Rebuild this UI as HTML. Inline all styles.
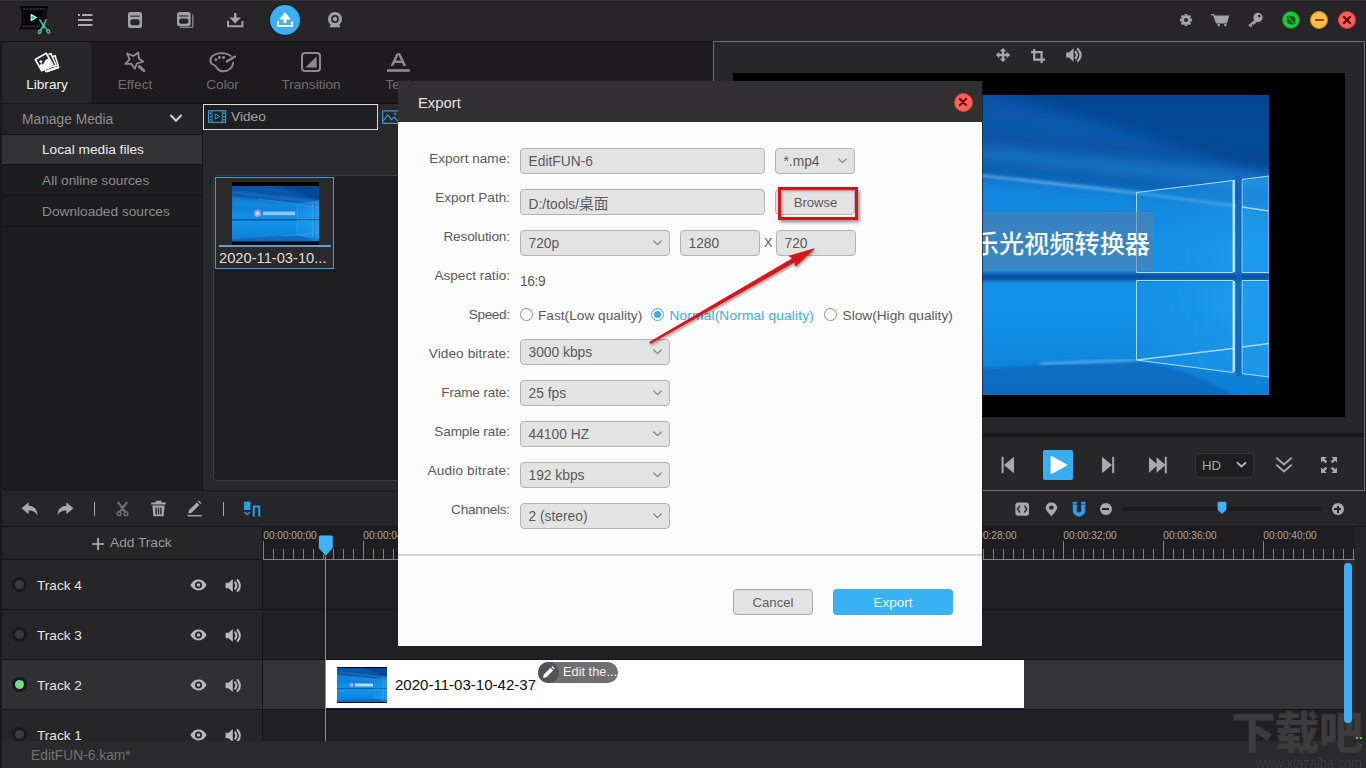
<!DOCTYPE html>
<html>
<head>
<meta charset="utf-8">
<title>EditFUN - Export</title>
<style>
*{box-sizing:border-box;margin:0;padding:0}
html,body{width:1366px;height:768px;overflow:hidden;background:#1d1c1e}
body{font-family:"Liberation Sans","Noto Sans CJK SC",sans-serif;color:#9a999b;position:relative}
.a{position:absolute}
.t{position:absolute;white-space:nowrap;line-height:1}
svg{position:absolute;overflow:visible}
/* top bar */
#topbar{left:0;top:0;width:1366px;height:41px;background:#272528}
#tabbar{left:2px;top:42px;width:711px;height:61px;background:#1d1b1e}
.tab{top:42px;height:61px}
.tablabel{font-size:13.6px;color:#706f71;top:77.5px;text-align:center;width:90px}
/* left panel */
.lp{left:2px;width:200px;height:30px;background:#1e1d1f}
.lpt{font-size:13.7px;color:#8d8c8e;left:42px}
/* dialog */
.lbl{font-size:13.6px;color:#5a595a;text-align:right;width:112px;left:398px}
.fld{position:absolute;height:26px;background:#e4e3e4;border:1px solid #b4b3b4;border-radius:4px}
.ft{font-size:13.8px;color:#5a595a}
.chev{width:10px;height:6px}
/* tracks */
.trk{left:2px;width:260px;height:49px;background:#262527}
.trkname{font-size:13.6px;color:#e6e6e6;left:37px}
.rl{font-size:10.1px;color:#a9a8aa;top:531px}
</style>
</head>
<body>
<!-- ===== base backgrounds ===== -->
<div class="a" style="left:0;top:0;width:2px;height:768px;background:#19181a"></div>
<div class="a" id="topbar"></div>
<div class="a" style="left:0;top:41px;width:713px;height:1px;background:#141315"></div>
<div class="a" id="tabbar"></div>
<div class="a tab" style="left:2px;width:89px;background:#272628"></div>
<div class="a" style="left:2px;top:103px;width:711px;height:1px;background:#151416"></div>

<!-- top line highlight -->
<div class="a" style="left:0;top:0;width:1366px;height:1px;background:#323133"></div>
<!-- logo -->
<svg style="left:18px;top:4px" width="36" height="34" viewBox="18 4 36 34">
  <path d="M20.4 6.9 H47.4 Q46.2 9 45.6 11 V24.4 Q46.2 26.4 47.4 28.4 H20.4 Q21.6 26.4 22.4 24.4 V11 Q21.6 9 20.4 6.9z" fill="#161517" stroke="#040404" stroke-width="1.5" stroke-linejoin="round"/>
  <rect x="24.6" y="11.2" width="18" height="13" rx="1" fill="#040404"/>
  <path d="M22.4 11 H45.6 M22.4 24.4 H45.6" stroke="#040404" stroke-width="1"/>
  <g fill="#3b3a3c"><rect x="23.2" y="8.3" width="1.5" height="1.3"/><rect x="26.6" y="8.3" width="1.5" height="1.3"/><rect x="30.0" y="8.3" width="1.5" height="1.3"/><rect x="33.4" y="8.3" width="1.5" height="1.3"/><rect x="36.8" y="8.3" width="1.5" height="1.3"/><rect x="40.2" y="8.3" width="1.5" height="1.3"/><rect x="43.6" y="8.3" width="1.5" height="1.3"/><rect x="23.2" y="25.8" width="1.5" height="1.3"/><rect x="26.6" y="25.8" width="1.5" height="1.3"/><rect x="30.0" y="25.8" width="1.5" height="1.3"/><rect x="33.4" y="25.8" width="1.5" height="1.3"/><rect x="36.8" y="25.8" width="1.5" height="1.3"/></g>
  <path d="M31.2 14.6 L36.4 17.5 L31.2 20.4Z" fill="#3fc6b4" stroke="#c4efe8" stroke-width="1.2" stroke-linejoin="round"/>
  <path d="M31.9 15.9 L34.8 17.5 L31.9 19.1Z" fill="#3fc6b4"/>
  <g fill="#45c9b6"><path d="M38.8 19.2 L40 19 L44.9 26.2 L48.6 30 L47.4 30.6 L43.2 27.2z"/><path d="M46.9 19 L45.7 18.9 L42.4 26.2 L39.2 30.2 L40.6 30.8 L44.2 27.2z"/></g>
  <g fill="none" stroke="#45c9b6" stroke-width="1.25"><ellipse cx="39.8" cy="31.7" rx="1.3" ry="1.9" transform="rotate(28 39.8 31.7)"/><ellipse cx="48.3" cy="31.4" rx="1.3" ry="1.9" transform="rotate(-32 48.3 31.4)"/></g>
</svg>
<!-- menu -->
<svg style="left:78px;top:13px" width="15" height="14" viewBox="0 0 15 14"><g fill="#acabad"><rect x="0" y="1" width="2" height="2"/><rect x="4" y="1" width="10.5" height="2"/><rect x="0" y="6" width="14.5" height="2"/><rect x="0" y="11" width="14.5" height="2"/></g></svg>
<!-- save -->
<svg style="left:127px;top:11px" width="16" height="18" viewBox="127 11 16 18"><rect x="128" y="12" width="14" height="16" rx="2.5" fill="#a3a2a4"/><rect x="130.3" y="15.6" width="9.4" height="1.1" fill="#262527"/><rect x="130.4" y="19.2" width="9.2" height="6" rx="2" fill="#262527"/></svg>
<!-- save all -->
<svg style="left:176px;top:11px" width="18" height="18" viewBox="176 11 18 18"><path d="M180 27.3 H192.8 V14.5" fill="none" stroke="#a3a2a4" stroke-width="1"/><rect x="177" y="12" width="13.6" height="14.2" rx="2.5" fill="#a3a2a4"/><rect x="179.2" y="15.4" width="9.2" height="1.1" fill="#262527"/><rect x="179.2" y="18.6" width="9.2" height="5.2" rx="2" fill="#262527"/></svg>
<!-- download -->
<svg style="left:226px;top:11px" width="18" height="18" viewBox="226 11 18 18"><path d="M234 13 h2.4 v4.6 h4.6 l-5.8 5.8 l-5.8 -5.8 h4.6z" fill="#a3a2a4"/><path d="M228 21 v5.2 h14.4 v-5.2" fill="none" stroke="#a3a2a4" stroke-width="2"/></svg>
<!-- export -->
<div class="a" style="left:270px;top:5px;width:30px;height:30px;border-radius:50%;background:#3bb0f5;box-shadow:0 0 0 1px #0f1e2c"></div>
<svg style="left:276px;top:11px" width="18" height="18" viewBox="276 11 18 18"><path d="M285 12.6 l5.2 6.6 h-3.9 v3.6 h-2.6 v-3.6 h-3.9z" fill="#fff" stroke="#fff" stroke-width="0.6" stroke-linejoin="round"/><path d="M278 21 v4.9 h14 v-4.9" fill="none" stroke="#fff" stroke-width="2"/></svg>
<!-- webcam -->
<svg style="left:327px;top:11px" width="16" height="18" viewBox="327 11 16 18"><path d="M329.6 27.2 q0 -3.4 5.4 -3.4 q5.4 0 5.4 3.4z" fill="#a3a2a4"/><circle cx="335" cy="19" r="7" fill="#a3a2a4"/><circle cx="335" cy="19" r="3.9" fill="#262527"/><circle cx="335" cy="19" r="2.2" fill="#a3a2a4"/></svg>
<!-- gear -->
<svg style="left:1179px;top:13px" width="14" height="14" viewBox="-8 -8 16 16"><g fill="#a3a2a4"><circle r="5.2"/><g id="gt"><rect x="-1.6" y="-6.9" width="3.2" height="13.8" rx="0.6"/></g><use href="#gt" transform="rotate(45)"/><use href="#gt" transform="rotate(90)"/><use href="#gt" transform="rotate(135)"/></g><circle r="2.3" fill="#262527"/></svg>
<!-- cart -->
<svg style="left:1210px;top:13px" width="20" height="14" viewBox="1210 13 20 14"><path d="M1211 14.6 h2.6 l2.9 8.2 h10.4" fill="none" stroke="#a3a2a4" stroke-width="1.4" stroke-linejoin="round"/><path d="M1214.3 15.6 h14.9 l-1.7 6.6 h-10.8z" fill="#a3a2a4"/><rect x="1217.6" y="24" width="2.2" height="2.2" fill="#a3a2a4"/><rect x="1224.2" y="24" width="2.2" height="2.2" fill="#a3a2a4"/></svg>
<!-- key -->
<svg style="left:1247px;top:12px" width="17" height="16" viewBox="1247 12 17 16"><circle cx="1258" cy="17.4" r="4.6" fill="#a3a2a4"/><circle cx="1259.3" cy="16.1" r="1.3" fill="#262527"/><path d="M1255.4 19.6 l-6.6 5.6 l1.6 1.8 l1.6-1.2 l-.9-1.2 l1.3-1 l.9 1.1 l3.6-3.1z" fill="#a3a2a4" stroke="#a3a2a4" stroke-width="0.8" stroke-linejoin="round"/></svg>
<!-- window buttons -->
<div class="a" style="left:1282px;top:11px;width:18px;height:18px;border-radius:50%;background:#22c840;border:1.5px solid #0b8a22"></div>
<svg style="left:1287px;top:16px" width="8.4" height="8.4" viewBox="0 0 10 10"><path d="M0.4 0.4 h7 l2.2 2.2 v7 h-7 l-2.2 -2.2z M1.2 1 L9 9" fill="#075c14" stroke="#075c14" stroke-width="0.8"/><path d="M1 1 L9 9" stroke="#22c840" stroke-width="1.2"/></svg>
<div class="a" style="left:1310px;top:11px;width:18px;height:18px;border-radius:50%;background:#fdbe41;border:1.5px solid #c98f1c"></div>
<div class="a" style="left:1315px;top:19px;width:8.5px;height:2px;background:#8f4b06"></div>
<div class="a" style="left:1338px;top:11px;width:18px;height:18px;border-radius:50%;background:#fb625c;border:1.5px solid #cf3d38"></div>
<svg style="left:1343px;top:16px" width="8" height="8" viewBox="0 0 8 8"><path d="M0.7 0.7 L7.3 7.3 M7.3 0.7 L0.7 7.3" stroke="#5c0505" stroke-width="2" stroke-linecap="round"/></svg>

<!-- Library icon -->
<svg style="left:33px;top:51px" width="28" height="23" viewBox="33 51 28 23">
  <path d="M52.4 56.7 L55.1 55.7 L58.7 67.6 L46.4 71.7 L45.2 70.2" fill="none" stroke="#f6f6f6" stroke-width="1.6" stroke-linejoin="round"/>
  <path d="M47 71 L58.2 67.2" stroke="#f6f6f6" stroke-width="2.2"/>
  <path d="M48.4 54.5 L50.9 53.6 L56.2 65.5 L53.4 66.8" fill="none" stroke="#f6f6f6" stroke-width="1.6" stroke-linejoin="round"/>
  <path d="M44 69.9 L56 65.2" stroke="#f6f6f6" stroke-width="1.3"/>
  <path d="M35.3 59.5 L46.2 53.3 L52.8 64.7 L41.8 70.8z" fill="#272628" stroke="#f6f6f6" stroke-width="1.7" stroke-linejoin="round"/>
  <path d="M39 66.2 L41.6 63 L43 64.7 L45.7 59.7 L48.3 58.4 L52.2 64.8 L42 70.3z" fill="#f6f6f6"/>
  <circle cx="40.9" cy="61.6" r="1.45" fill="#f6f6f6"/>
</svg>
<div class="t tablabel" style="left:2px;color:#f1f1f1">Library</div>
<!-- Effect icon -->
<svg style="left:124px;top:51px" width="23" height="23" viewBox="124 51 23 23">
  <path d="M127 53.4 L133.4 56 L138.3 52.4 L138.8 58.5 L143.2 61.6 L136.8 63.5 L134.9 68.7 L131.3 63.9 L125.3 63.9 L129.7 59.3z" fill="none" stroke="#8c8b8d" stroke-width="1.8" stroke-linejoin="round"/>
  <path d="M139.4 66.6 L144 70.8" stroke="#8c8b8d" stroke-width="2.9" stroke-linecap="round"/>
</svg>
<div class="t tablabel" style="left:90px">Effect</div>
<!-- Color icon -->
<svg style="left:209px;top:51px" width="28" height="22" viewBox="209 51 28 22">
  <path d="M230.7 55.9 C228.5 54 225 53.1 221.6 53.1 C215 53.1 210.3 56.4 210.3 60.4 C210.3 63 212.4 64.2 214 65 C216 66 216.6 67.6 217.6 68.8 C219 70.6 221 71.3 223.2 71.3 C228.6 71.3 232.6 67.6 233.2 62.8" fill="none" stroke="#8c8b8d" stroke-width="1.9" stroke-linecap="round"/>
  <path d="M226.8 61.6 L235 56.6" stroke="#8c8b8d" stroke-width="2.3" stroke-linecap="round"/>
  <circle cx="215.9" cy="59.6" r="1.45" fill="#8c8b8d"/><circle cx="219.4" cy="57.5" r="1.45" fill="#8c8b8d"/><circle cx="223.6" cy="57.5" r="1.45" fill="#8c8b8d"/>
</svg>
<div class="t tablabel" style="left:177.5px">Color</div>
<!-- Transition icon -->
<svg style="left:300px;top:51px" width="22" height="22" viewBox="300 51 22 22">
  <rect x="302" y="53" width="18" height="18" rx="3" fill="none" stroke="#8c8b8d" stroke-width="2"/>
  <path d="M316.6 56.4 v11.2 h-11.2z" fill="#8c8b8d"/>
</svg>
<div class="t tablabel" style="left:266px">Transition</div>
<!-- Text icon -->
<svg style="left:386px;top:52px" width="25" height="21" viewBox="386 52 25 21">
  <path d="M390.4 65.9 L396.7 53.3 H400.1 L406.4 65.9 H403.5 L402.1 62.9 H394.7 L393.3 65.9z M395.8 60.6 H401 L398.4 55z" fill="#8c8b8d" fill-rule="evenodd"/>
  <rect x="387" y="69.2" width="22.8" height="2.6" fill="#8c8b8d"/>
</svg>
<div class="t tablabel" style="left:353px">Text</div>

<div class="a" style="left:2px;top:104px;width:200px;height:387px;background:#1d1c1e"></div>
<div class="a lp" style="top:104px;background:#242325"></div>
<div class="a" style="left:2px;top:134px;width:200px;height:1px;background:#141315"></div>
<div class="a lp" style="top:135px;height:29px;background:#333234"></div>
<div class="a" style="left:2px;top:164px;width:200px;height:1px;background:#141315"></div>
<div class="a" style="left:2px;top:195px;width:200px;height:1px;background:#141315"></div>
<div class="a" style="left:2px;top:226px;width:200px;height:1px;background:#141315"></div>
<div class="t" style="left:22px;top:112.6px;font-size:13.8px;color:#8f8e90">Manage Media</div>
<svg style="left:169px;top:113px" width="14" height="11" viewBox="0 0 14 11"><path d="M2 2.5 L7 7.8 L12 2.5" fill="none" stroke="#d2d1d3" stroke-width="2" stroke-linecap="round" stroke-linejoin="round"/></svg>
<div class="t lpt" style="top:143px;color:#ececec">Local media files</div>
<div class="t lpt" style="top:174px">All online sources</div>
<div class="t lpt" style="top:205px">Downloaded sources</div>

<div class="a" style="left:203px;top:104px;width:510px;height:386px;background:#282729"></div>
<div class="a" style="left:202px;top:104px;width:1px;height:387px;background:#161517"></div>
<!-- video tab -->
<div class="a" style="left:203px;top:104px;width:175px;height:26px;background:#1f1e20;border:1px solid #dcdcdc"></div>
<svg style="left:208px;top:110.4px" width="19" height="13.3" viewBox="0 0 20 14"><rect x="0.6" y="0.8" width="18" height="12.2" fill="none" stroke="#3c9bd6" stroke-width="1.2"/><path d="M4.2 0.8 v12.2 M15 0.8 v12.2" stroke="#3c9bd6" stroke-width="1"/><g fill="#3c9bd6"><rect x="1.6" y="2.6" width="1.8" height="1.6"/><rect x="1.6" y="6.1" width="1.8" height="1.6"/><rect x="1.6" y="9.6" width="1.8" height="1.6"/><rect x="15.8" y="2.6" width="1.8" height="1.6"/><rect x="15.8" y="6.1" width="1.8" height="1.6"/><rect x="15.8" y="9.6" width="1.8" height="1.6"/></g><path d="M7.6 4.2 l4.6 2.7 l-4.6 2.7z" fill="none" stroke="#3c9bd6" stroke-width="1"/></svg>
<div class="t" style="left:231px;top:110.3px;font-size:13.7px;color:#a5a4a6">Video</div>
<!-- image tab icon (partly hidden) -->
<svg style="left:382px;top:110px" width="18" height="15" viewBox="0 0 18 15"><rect x="0.6" y="0.8" width="17" height="12.6" rx="1" fill="none" stroke="#3c9bd6" stroke-width="1.2"/><path d="M1 11 l4.8 -6 l3.6 4.6 l2.6 -2.6 l4 4" fill="none" stroke="#3c9bd6" stroke-width="1.1"/><circle cx="13.2" cy="3.8" r="1" fill="none" stroke="#3c9bd6" stroke-width="0.9"/></svg>
<!-- list area -->
<div class="a" style="left:213px;top:175px;width:491px;height:306px;background:#1e1d1f;border:1px solid #3e3d40;border-radius:3px"></div>
<!-- thumbnail card -->
<div class="a" style="left:215px;top:177px;width:119px;height:92px;background:#2a292b;border:1px solid #4a9bcf;box-shadow:0 0 0 1px #17222c"></div>
<div class="a" style="left:232px;top:182px;width:87px;height:62.5px;background:#000"></div>
<svg style="left:232px;top:185.5px" width="87" height="55.5"><use href="#wall" width="87" height="55.5"/><circle cx="25.5" cy="27.5" r="3.4" fill="#b49cf0"/><circle cx="25.5" cy="27.5" r="1.4" fill="#e8d8ff"/><rect x="31" y="25.6" width="32" height="3.6" fill="#e4eefa" opacity=".6"/></svg>
<div class="a" style="left:219px;top:245px;width:112px;height:1.6px;background:#56a4d6"></div>
<div class="t" style="left:219px;top:250.5px;font-size:14.7px;color:#dedede">2020-11-03-10...</div>

<div class="a" style="left:713px;top:41px;width:652px;height:450px;background:#272628;border:1px solid #6e6d6f"></div>
<!-- preview tools -->
<svg style="left:996px;top:48px" width="14" height="14" viewBox="-7 -7 14 14"><g fill="#a9a8aa"><rect x="-1.2" y="-4.6" width="2.4" height="9.2"/><rect x="-4.6" y="-1.2" width="9.2" height="2.4"/><path d="M0 -7.1 l3.3 3.4 h-6.6z M0 7.1 l3.3 -3.4 h-6.6z M-7.1 0 l3.4 -3.3 v6.6z M7.1 0 l-3.4 -3.3 v6.6z"/></g></svg>
<svg style="left:1031px;top:49px" width="14" height="14" viewBox="0 0 14 14"><path d="M3.2 0 v10.6 h10.8 M0 3.2 h10.6 v10.8" fill="none" stroke="#a9a8aa" stroke-width="2.2"/></svg>
<svg style="left:1066px;top:48px" width="17" height="14" viewBox="0 0 17 14"><path d="M0.2 4.4 h2.8 l4.6 -4.2 v13.6 l-4.6 -4.2 h-2.8z" fill="#a9a8aa"/><path d="M9.6 3.8 q2.6 3.2 0 6.4 M11.8 1 q5.6 6 0 12" fill="none" stroke="#a9a8aa" stroke-width="2.2" stroke-linecap="round"/></svg>
<!-- black area -->
<div class="a" style="left:733px;top:73px;width:612px;height:344px;background:#000"></div>
<!-- video frame -->
<svg style="left:0;top:0" width="0" height="0"><defs>
  <filter id="b6" x="-20%" y="-20%" width="140%" height="140%"><feGaussianBlur stdDeviation="6"/></filter>
  <filter id="b2" x="-20%" y="-20%" width="140%" height="140%"><feGaussianBlur stdDeviation="1.6"/></filter>
  <linearGradient id="pg" x1="0" x2="1"><stop offset="0" stop-color="#1690e4"/><stop offset="1" stop-color="#22a0f0"/></linearGradient>
  <linearGradient id="wbg" x1="0" y1="0" x2="0" y2="1"><stop offset="0" stop-color="#0a52a6"/><stop offset=".2" stop-color="#0b62b8"/><stop offset=".36" stop-color="#0e7cd4"/><stop offset=".5" stop-color="#118ee6"/><stop offset=".7" stop-color="#1292ea"/><stop offset=".86" stop-color="#0f88de"/><stop offset="1" stop-color="#0c7ed6"/></linearGradient>
  <symbol id="wall" viewBox="736 95 533 300" preserveAspectRatio="none">
  <rect x="736" y="95" width="533" height="300" fill="url(#wbg)"/>
  <path d="M700 112 L1320 150 L1320 212 L1137 190 L700 158z" fill="#07458f" opacity=".4" filter="url(#b6)"/>
  <path d="M960 80 L1320 80 L1320 190z" fill="#063a80" opacity=".55" filter="url(#b6)"/>
  <path d="M700 118 L1320 178 L1320 196 L700 132z" fill="#2a9cf0" opacity=".35" filter="url(#b6)"/>
  <path d="M736 150 L1137 192 L1137 215 L736 205z" fill="#1492ea" opacity=".55" filter="url(#b6)"/>
  <path d="M900 166.5 L1137 193" stroke="#bfe6ff" stroke-width="1.6" opacity=".75" filter="url(#b2)"/>
  <path d="M1137 193 L1236 206" stroke="#d4efff" stroke-width="1.6" opacity=".8" filter="url(#b2)"/>
  <path d="M736 273 H1269 V281 H736z" fill="#07489a" opacity=".85" filter="url(#b2)"/>
  <path d="M700 386 Q960 368 1140 361 Q1200 372 1240 400 L700 400z" fill="#0a5eb4" opacity=".6" filter="url(#b2)"/>
  <path d="M1040 364 L1136 360" stroke="#cfeaff" stroke-width="1.6" opacity=".7" filter="url(#b2)"/>
  <path d="M1136.5 192.5 L1233 180.5 V272.5 H1136.5z" fill="url(#pg)" fill-opacity=".5" stroke="#a8dcfb" stroke-width="1"/>
  <path d="M1136.5 280.5 H1233 V372.5 L1136.5 360z" fill="url(#pg)" fill-opacity=".5" stroke="#a8dcfb" stroke-width="1"/>
  <path d="M1242 179.5 L1269 176 V272.5 H1242z" fill="#24a2f0" fill-opacity=".6" stroke="#a8dcfb" stroke-width="1"/>
  <path d="M1242 280.5 H1269 V377 L1242 373.5z" fill="#24a2f0" fill-opacity=".6" stroke="#a8dcfb" stroke-width="1"/>
  <path d="M1136.5 360 L1233 348.5 M1242 347 L1269 343.5 M1242 207 L1269 211" stroke="#c4e8ff" stroke-width="1.3" opacity=".8"/>
  <path d="M1234 180 V272 M1234 281 V372" stroke="#f2fbff" stroke-width="2.4" opacity=".95" filter="url(#b2)"/>
  <path d="M1234 180 V272 M1234 281 V372" stroke="#ffffff" stroke-width="1.4"/>
  <rect x="1236" y="176" width="5.5" height="200" fill="#0a66bc" opacity=".8"/>
  </symbol>
</defs></svg>
<div class="a" style="left:736px;top:95px;width:533px;height:300px;overflow:hidden;background:#0c70c8">
<svg style="left:0;top:0" width="533" height="300"><use href="#wall" width="533" height="300"/><rect x="0" y="117" width="418" height="59" fill="#5a80a8" opacity=".55"/></svg>
<div class="t" style="left:220px;top:134.5px;width:194px;text-align:right;font-size:25.2px;font-weight:500;color:#f8fafc;font-family:'Noto Sans CJK SC','Liberation Sans',sans-serif">乐光视频转换器</div>
</div>
<!-- separator -->
<div class="a" style="left:714px;top:433px;width:650px;height:4px;background:#19181a"></div>
<!-- controls -->
<svg style="left:1001px;top:456px" width="14" height="18" viewBox="0 0 14 18"><rect x="0.6" y="0.8" width="2" height="16.4" fill="#a9a8aa"/><path d="M13 0.8 v16.4 l-10 -8.2z" fill="#a9a8aa"/></svg>
<div class="a" style="left:1043px;top:450px;width:30px;height:30px;background:#38adf1;border-radius:2px"></div>
<svg style="left:1050px;top:455px" width="18" height="20" viewBox="0 0 18 20"><path d="M1.4 1.6 L16.2 10 L1.4 18.4z" fill="#fff" stroke="#fff" stroke-width="1.6" stroke-linejoin="round"/></svg>
<svg style="left:1101px;top:456px" width="14" height="18" viewBox="0 0 14 18"><rect x="11.2" y="0.8" width="2" height="16.4" fill="#a9a8aa"/><path d="M1 0.8 v16.4 l10 -8.2z" fill="#a9a8aa"/></svg>
<svg style="left:1148px;top:456px" width="20" height="18" viewBox="0 0 20 18"><rect x="16.8" y="0.8" width="2" height="16.4" fill="#a9a8aa"/><path d="M1 1.2 v15.6 l9 -7.8z M8.6 1.2 v15.6 l9 -7.8z" fill="#a9a8aa"/></svg>
<div class="a" style="left:1195px;top:453px;width:59px;height:25px;background:#1e1d1f;border:1px solid #343335;border-radius:4px"></div>
<div class="t" style="left:1202px;top:458.5px;font-size:13.2px;color:#a9a8aa">HD</div>
<svg style="left:1236px;top:461px" width="11" height="8" viewBox="0 0 11 8"><path d="M1.4 1.6 L5.5 5.6 L9.6 1.6" fill="none" stroke="#b8b7b9" stroke-width="1.8" stroke-linecap="round" stroke-linejoin="round"/></svg>
<svg style="left:1275px;top:456px" width="18" height="18" viewBox="0 0 18 18"><path d="M1.2 1.6 L9 8.4 L16.8 1.6 M1.2 8.6 L9 15.4 L16.8 8.6" fill="none" stroke="#a9a8aa" stroke-width="1.9"/></svg>
<svg style="left:1321px;top:457px" width="16" height="16" viewBox="0 0 16 16"><g fill="#a9a8aa"><path d="M0 0 h5.6 l-1.9 1.9 l2.6 2.6 l-1.8 1.8 l-2.6 -2.6 l-1.9 1.9z"/><path d="M16 0 v5.6 l-1.9 -1.9 l-2.6 2.6 l-1.8 -1.8 l2.6 -2.6 l-1.9 -1.9z"/><path d="M0 16 v-5.6 l1.9 1.9 l2.6 -2.6 l1.8 1.8 l-2.6 2.6 l1.9 1.9z"/><path d="M16 16 h-5.6 l1.9 -1.9 l-2.6 -2.6 l1.8 -1.8 l2.6 2.6 l1.9 -1.9z"/></g></svg>

<div class="a" style="left:2px;top:491px;width:1364px;height:250px;background:#262527"></div>
<div class="a" style="left:2px;top:526px;width:1364px;height:1px;background:#151416"></div>
<svg style="left:21px;top:501px" width="18" height="16" viewBox="0 0 18 16"><path d="M7.6 1.2 v3.6 c5.4 0.2 8.6 3.4 9 9.6 c-2 -3.6 -4.6 -5 -9 -5 v3.8 l-7 -6z" fill="#a9a8aa"/></svg>
<svg style="left:56px;top:501px" width="18" height="16" viewBox="0 0 18 16"><path d="M10.4 1.2 v3.6 c-5.4 0.2 -8.6 3.4 -9 9.6 c2 -3.6 4.6 -5 9 -5 v3.8 l7 -6z" fill="#a9a8aa"/></svg>
<div class="a" style="left:94px;top:502px;width:1px;height:14px;background:#a9a8aa"></div>
<svg style="left:116px;top:501.6px" width="13" height="14.6" viewBox="0 0 15 17"><path d="M2.6 0.8 L10.6 11.4 M12.4 0.8 L4.4 11.4" stroke="#6e6d6f" stroke-width="2.6" stroke-linecap="round" fill="none"/><circle cx="3.4" cy="13.6" r="2.2" fill="none" stroke="#6e6d6f" stroke-width="1.7"/><circle cx="11.6" cy="13.6" r="2.2" fill="none" stroke="#6e6d6f" stroke-width="1.7"/></svg>
<svg style="left:150px;top:500px" width="17" height="17" viewBox="0 0 17 17"><path d="M5.8 0.8 h5.4 v1.6 h4.6 v2 h-14.6 v-2 h4.6z" fill="#a9a8aa"/><path d="M2.4 5.6 h12.2 l-1 10.6 h-10.2z M5.4 7.4 v7 h1.4 v-7z M7.8 7.4 v7 h1.4 v-7z M10.2 7.4 v7 h1.4 v-7z" fill="#a9a8aa" fill-rule="evenodd"/></svg>
<svg style="left:187px;top:500px" width="16" height="17" viewBox="0 0 16 17"><path d="M2 10.2 L9.8 2.4 l2.6 2.6 L4.6 12.8 l-3.4 0.8z M10.8 1.4 l1 -1 l2.6 2.6 l-1 1z" fill="#a9a8aa"/><rect x="0.6" y="15" width="14" height="1.4" fill="#a9a8aa"/></svg>
<div class="a" style="left:223px;top:502px;width:1px;height:14px;background:#a9a8aa"></div>
<svg style="left:243px;top:501px" width="19" height="16" viewBox="0 0 19 16"><rect x="1" y="0.6" width="6.4" height="8.4" fill="#2a9ce6"/><path d="M1.4 11 L4.2 13.6 L7 11" fill="none" stroke="#2a9ce6" stroke-width="1.5"/><path d="M10.8 15.4 V5.4 h5.4 V15.4" fill="none" stroke="#2a9ce6" stroke-width="2"/></svg>
<svg style="left:1014.8px;top:501.8px" width="14.4" height="14.2" viewBox="0 0 16 14" preserveAspectRatio="none"><rect x="0.4" y="0.4" width="15.2" height="13.2" rx="3" fill="#a9a8aa"/><path d="M5.6 3.6 L2.8 7 L5.6 10.4 M10.4 3.6 L13.2 7 L10.4 10.4" fill="none" stroke="#262527" stroke-width="1.5"/></svg>
<svg style="left:1044.6px;top:502.1px" width="12.8" height="15" viewBox="0 0 12 16" preserveAspectRatio="none"><path d="M6 0.6 a5.4 5.4 0 0 1 5.4 5.4 c0 3.2 -3.4 6.2 -5.4 9.4 c-2 -3.2 -5.4 -6.2 -5.4 -9.4 a5.4 5.4 0 0 1 5.4 -5.4z" fill="#a9a8aa"/><circle cx="6" cy="6" r="2.2" fill="#262527"/></svg>
<svg style="left:1072px;top:501px" width="14" height="16" viewBox="0 0 14 16"><path d="M2.8 0.8 v8.6 a4.2 4.2 0 0 0 8.4 0 v-8.6" fill="none" stroke="#2a9ce6" stroke-width="4.1"/><path d="M0.6 3.4 h4.4 M9 3.4 h4.4" stroke="#1c5f8e" stroke-width="1.1"/></svg>
<div class="a" style="left:1099.5px;top:503px;width:12.4px;height:12.4px;border-radius:50%;background:#a9a8aa"></div><div class="a" style="left:1102.2px;top:508.2px;width:7px;height:2px;background:#262527"></div>
<div class="a" style="left:1122px;top:507px;width:200px;height:4px;border-radius:2px;background:#19181a"></div>
<svg style="left:1217px;top:501px" width="10" height="14" viewBox="0 0 10 14"><path d="M1.6 0.8 h6.8 a1 1 0 0 1 1 1 v7 l-4.4 4.2 l-4.4 -4.2 v-7 a1 1 0 0 1 1 -1z" fill="#3fb2f4"/></svg>
<div class="a" style="left:1331.5px;top:503px;width:12.4px;height:12.4px;border-radius:50%;background:#a9a8aa"></div><div class="a" style="left:1334.2px;top:508.2px;width:7px;height:2px;background:#262527"></div><div class="a" style="left:1336.7px;top:505.7px;width:2px;height:7px;background:#262527"></div>
<div class="a" style="left:2px;top:559px;width:1342px;height:1px;background:#151416"></div>
<svg style="left:91px;top:537px" width="14" height="14" viewBox="0 0 14 14"><path d="M7 1 v12 M1 7 h12" stroke="#bcbbbd" stroke-width="1.6"/></svg>
<div class="t" style="left:110px;top:536px;font-size:13.7px;color:#9c9b9d">Add Track</div>
<div class="a" style="left:263px;top:527px;width:1092px;height:32px;background:#1e1d1f"></div>
<svg style="left:0;top:0" width="1366" height="768" viewBox="0 0 1366 768"><path d="M263.5 541V559M273.5 549V559M283.5 549V559M293.5 549V559M303.5 549V559M313.5 549V559M323.5 549V559M333.5 549V559M343.5 549V559M353.5 549V559M363.5 541V559M373.5 549V559M383.5 549V559M393.5 549V559M403.5 549V559M413.5 549V559M423.5 549V559M433.5 549V559M443.5 549V559M453.5 549V559M463.5 541V559M473.5 549V559M483.5 549V559M493.5 549V559M503.5 549V559M513.5 549V559M523.5 549V559M533.5 549V559M543.5 549V559M553.5 549V559M563.5 541V559M573.5 549V559M583.5 549V559M593.5 549V559M603.5 549V559M613.5 549V559M623.5 549V559M633.5 549V559M643.5 549V559M653.5 549V559M663.5 541V559M673.5 549V559M683.5 549V559M693.5 549V559M703.5 549V559M713.5 549V559M723.5 549V559M733.5 549V559M743.5 549V559M753.5 549V559M763.5 541V559M773.5 549V559M783.5 549V559M793.5 549V559M803.5 549V559M813.5 549V559M823.5 549V559M833.5 549V559M843.5 549V559M853.5 549V559M863.5 541V559M873.5 549V559M883.5 549V559M893.5 549V559M903.5 549V559M913.5 549V559M923.5 549V559M933.5 549V559M943.5 549V559M953.5 549V559M963.5 541V559M973.5 549V559M983.5 549V559M993.5 549V559M1003.5 549V559M1013.5 549V559M1023.5 549V559M1033.5 549V559M1043.5 549V559M1053.5 549V559M1063.5 541V559M1073.5 549V559M1083.5 549V559M1093.5 549V559M1103.5 549V559M1113.5 549V559M1123.5 549V559M1133.5 549V559M1143.5 549V559M1153.5 549V559M1163.5 541V559M1173.5 549V559M1183.5 549V559M1193.5 549V559M1203.5 549V559M1213.5 549V559M1223.5 549V559M1233.5 549V559M1243.5 549V559M1253.5 549V559M1263.5 541V559M1273.5 549V559M1283.5 549V559M1293.5 549V559M1303.5 549V559M1313.5 549V559M1323.5 549V559M1333.5 549V559M1343.5 549V559M1353.5 549V559" stroke="#828183" stroke-width="1" fill="none"/><path d="M263 559.5H1355" stroke="#828183" stroke-width="1"/></svg>
<div class="t rl" style="left:263.3px">00:00:00;00</div>
<div class="t rl" style="left:363.3px">00:00:04;00</div>
<div class="t rl" style="left:463.3px">00:00:08;00</div>
<div class="t rl" style="left:563.3px">00:00:12;00</div>
<div class="t rl" style="left:663.3px">00:00:16;00</div>
<div class="t rl" style="left:763.3px">00:00:20;00</div>
<div class="t rl" style="left:863.3px">00:00:24;00</div>
<div class="t rl" style="left:963.3px">00:00:28;00</div>
<div class="t rl" style="left:1063.3px">00:00:32;00</div>
<div class="t rl" style="left:1163.3px">00:00:36;00</div>
<div class="t rl" style="left:1263.3px">00:00:40;00</div>
<div class="a" style="left:263px;top:560px;width:1081px;height:181px;background:#201f21"></div>
<div class="a" style="left:1344px;top:560px;width:11px;height:181px;background:#2b2a2c"></div>
<div class="a" style="left:262px;top:527px;width:1px;height:214px;background:#151416"></div>
<div class="a trk" style="top:560px;height:49px"></div>
<div class="a" style="left:2px;top:609px;width:1342px;height:1px;background:#151416"></div>
<div class="a" style="left:12px;top:577px;width:15px;height:15px;border-radius:50%;background:#19181a"></div>
<div class="a" style="left:15px;top:580px;width:9px;height:9px;border-radius:50%;background:#3a393b"></div>
<div class="t trkname" style="top:578.5px">Track 4</div>
<svg style="left:190px;top:579px" width="17" height="12" viewBox="0 0 17 12"><path d="M0.4 6 C3 1.6 6 0.6 8.5 0.6 C11 0.6 14 1.6 16.6 6 C14 10.4 11 11.4 8.5 11.4 C6 11.4 3 10.4 0.4 6z" fill="#b9b8ba"/><circle cx="8.5" cy="6" r="3.5" fill="#262527"/><circle cx="8.5" cy="6" r="1.8" fill="#b9b8ba"/></svg>
<svg style="left:225px;top:578px" width="18" height="15" viewBox="0 0 18 15"><path d="M0.6 4.8 h3 l4.2 -3.8 v13 l-4.2 -3.8 h-3z" fill="#b9b8ba"/><path d="M10.2 4.4 q2.4 3.1 0 6.2 M12.6 2 q4.6 5.5 0 11" fill="none" stroke="#b9b8ba" stroke-width="2.1" stroke-linecap="round"/></svg>
<div class="a trk" style="top:610px;height:49px"></div>
<div class="a" style="left:2px;top:659px;width:1342px;height:1px;background:#151416"></div>
<div class="a" style="left:12px;top:627px;width:15px;height:15px;border-radius:50%;background:#19181a"></div>
<div class="a" style="left:15px;top:630px;width:9px;height:9px;border-radius:50%;background:#3a393b"></div>
<div class="t trkname" style="top:628.5px">Track 3</div>
<svg style="left:190px;top:629px" width="17" height="12" viewBox="0 0 17 12"><path d="M0.4 6 C3 1.6 6 0.6 8.5 0.6 C11 0.6 14 1.6 16.6 6 C14 10.4 11 11.4 8.5 11.4 C6 11.4 3 10.4 0.4 6z" fill="#b9b8ba"/><circle cx="8.5" cy="6" r="3.5" fill="#262527"/><circle cx="8.5" cy="6" r="1.8" fill="#b9b8ba"/></svg>
<svg style="left:225px;top:628px" width="18" height="15" viewBox="0 0 18 15"><path d="M0.6 4.8 h3 l4.2 -3.8 v13 l-4.2 -3.8 h-3z" fill="#b9b8ba"/><path d="M10.2 4.4 q2.4 3.1 0 6.2 M12.6 2 q4.6 5.5 0 11" fill="none" stroke="#b9b8ba" stroke-width="2.1" stroke-linecap="round"/></svg>
<div class="a trk" style="top:660px;height:49px;background:#302f31"></div>
<div class="a" style="left:263px;top:660px;width:1081px;height:49px;background:#343335"></div>
<div class="a" style="left:2px;top:709px;width:1342px;height:1px;background:#151416"></div>
<div class="a" style="left:12px;top:677px;width:15px;height:15px;border-radius:50%;background:#19181a"></div>
<div class="a" style="left:15px;top:680px;width:9px;height:9px;border-radius:50%;background:#6fe08a"></div>
<div class="t trkname" style="top:678.5px">Track 2</div>
<svg style="left:190px;top:679px" width="17" height="12" viewBox="0 0 17 12"><path d="M0.4 6 C3 1.6 6 0.6 8.5 0.6 C11 0.6 14 1.6 16.6 6 C14 10.4 11 11.4 8.5 11.4 C6 11.4 3 10.4 0.4 6z" fill="#b9b8ba"/><circle cx="8.5" cy="6" r="3.5" fill="#262527"/><circle cx="8.5" cy="6" r="1.8" fill="#b9b8ba"/></svg>
<svg style="left:225px;top:678px" width="18" height="15" viewBox="0 0 18 15"><path d="M0.6 4.8 h3 l4.2 -3.8 v13 l-4.2 -3.8 h-3z" fill="#b9b8ba"/><path d="M10.2 4.4 q2.4 3.1 0 6.2 M12.6 2 q4.6 5.5 0 11" fill="none" stroke="#b9b8ba" stroke-width="2.1" stroke-linecap="round"/></svg>
<div class="a trk" style="top:710px;height:31px"></div>
<div class="a" style="left:12px;top:727px;width:15px;height:15px;border-radius:50%;background:#19181a"></div>
<div class="a" style="left:15px;top:730px;width:9px;height:9px;border-radius:50%;background:#3a393b"></div>
<div class="t trkname" style="top:728.5px">Track 1</div>
<svg style="left:190px;top:729px" width="17" height="12" viewBox="0 0 17 12"><path d="M0.4 6 C3 1.6 6 0.6 8.5 0.6 C11 0.6 14 1.6 16.6 6 C14 10.4 11 11.4 8.5 11.4 C6 11.4 3 10.4 0.4 6z" fill="#b9b8ba"/><circle cx="8.5" cy="6" r="3.5" fill="#262527"/><circle cx="8.5" cy="6" r="1.8" fill="#b9b8ba"/></svg>
<svg style="left:225px;top:728px" width="18" height="15" viewBox="0 0 18 15"><path d="M0.6 4.8 h3 l4.2 -3.8 v13 l-4.2 -3.8 h-3z" fill="#b9b8ba"/><path d="M10.2 4.4 q2.4 3.1 0 6.2 M12.6 2 q4.6 5.5 0 11" fill="none" stroke="#b9b8ba" stroke-width="2.1" stroke-linecap="round"/></svg>
<div class="a" style="left:326px;top:660px;width:698px;height:49px;background:#fff;border-bottom:1px solid #1c1b3a"></div>
<div class="a" style="left:337px;top:667px;width:50px;height:36px;background:#000"></div>
<svg style="left:337px;top:668px" width="50" height="34" viewBox="0 0 50 32" preserveAspectRatio="none"><use href="#wall" width="50" height="32"/><circle cx="14.6" cy="16" r="2" fill="#b49cf0"/><rect x="18" y="14.6" width="18" height="2.8" fill="#e4eefa" opacity=".8"/></svg>
<div class="t" style="left:395px;top:676.6px;font-size:15.05px;color:#0a0a0a">2020-11-03-10-42-37</div>
<div class="a" style="left:538px;top:662px;width:80px;height:21px;border-radius:10.5px;background:#6f6e70"></div>
<div class="a" style="left:538px;top:662px;width:21px;height:21px;border-radius:50%;background:#525153"></div>
<svg style="left:542px;top:666px" width="13" height="13" viewBox="0 0 13 13"><path d="M1 12 l0.8 -3.4 L8.6 1.8 l2.6 2.6 L4.4 11.2z M9.4 1 l0.9 -0.9 l2.6 2.6 l-0.9 0.9z" fill="#fff"/></svg>
<div class="t" style="left:563px;top:666px;font-size:12.8px;color:#f4f4f4">Edit the...</div>
<div class="a" style="left:325px;top:553px;width:1px;height:188px;background:#8d8c8e"></div>
<svg style="left:316.7px;top:533.8px" width="17.6" height="23.4" viewBox="0 0 17 23"><path d="M3.4 1 h10.2 a2.2 2.2 0 0 1 2.2 2.2 v10.6 l-7.3 8 l-7.3 -8 v-10.6 a2.2 2.2 0 0 1 2.2 -2.2z" fill="#3fb3f5" stroke="#12202c" stroke-width="0.8"/></svg>
<div class="a" style="left:2px;top:741px;width:1364px;height:27px;background:#2a292b"></div>
<div class="t" style="left:31px;top:749.2px;font-size:13.8px;color:#737274">EditFUN-6.kam*</div>
<div class="t" style="left:1231px;top:708px;font-size:44.5px;font-weight:900;letter-spacing:-0.6px;color:#3c3b3d;font-family:'Noto Sans CJK SC',sans-serif">下载吧</div>
<div class="t" style="left:1256px;top:756px;font-size:12.9px;color:#3c3b3d;transform:scaleY(1.3);transform-origin:0 0">www.xiazaiba.com</div>
<div class="a" style="left:1344px;top:563px;width:8px;height:160px;border-radius:4px;background:#3cb0f4"></div>
<div class="a" style="left:1356px;top:737px;width:2px;height:2px;background:#3cd04c"></div><div class="a" style="left:1360px;top:737px;width:2px;height:2px;background:#3cd04c"></div>

<div class="a" style="left:398px;top:81px;width:584px;height:565px;background:#fdfcfd"></div>
<div class="a" style="left:398px;top:81px;width:584px;height:41px;background:#323032"></div>
<div class="a" style="left:982px;top:81px;width:1px;height:565px;background:#1a1a2a;opacity:.7"></div>
<div class="t" style="left:418px;top:95.5px;font-size:14.8px;color:#e4e3e4">Export</div>
<div class="a" style="left:953.5px;top:92.5px;width:19px;height:19px;border-radius:50%;background:#f8635d;border:1px solid #d8413c"></div>
<svg style="left:959px;top:98px" width="8" height="8" viewBox="0 0 8 8"><path d="M0.8 0.8 L7.2 7.2 M7.2 0.8 L0.8 7.2" stroke="#6b0404" stroke-width="2" stroke-linecap="round"/></svg>
<div class="t lbl" style="top:151.9px;">Export name:</div>
<div class="fld" style="left:520px;top:148px;width:245px"></div>
<div class="t ft" style="left:528.5px;top:155.2px">EditFUN-6</div>
<div class="fld" style="left:775px;top:148px;width:80px"></div>
<div class="t ft" style="left:783.5px;top:155.2px">*.mp4</div>
<svg style="left:838px;top:157.5px" width="9" height="6" viewBox="0 0 9 6"><path d="M0.8 1 L4.5 4.6 L8.2 1" fill="none" stroke="#828182" stroke-width="1.2" stroke-linecap="round" stroke-linejoin="round"/></svg>
<div class="t lbl" style="top:190.8px;">Export Path:</div>
<div class="fld" style="left:520px;top:189px;width:245px"></div>
<div class="t ft" style="left:528.5px;top:196.2px">D:/tools/<span style="font-family:'Noto Sans CJK SC',sans-serif;font-size:14.6px">桌面</span></div>
<div class="fld" style="left:775px;top:189px;width:80px"></div>
<div class="t ft" style="left:775px;top:195.8px;width:81px;text-align:center;font-size:13.1px">Browse</div>
<div class="t lbl" style="top:229.7px;letter-spacing:-0.14px;margin-left:-0.14px">Resolution:</div>
<div class="fld" style="left:520px;top:230px;width:150px"></div>
<div class="t ft" style="left:528.5px;top:237.2px">720p</div>
<svg style="left:653px;top:239.5px" width="9" height="6" viewBox="0 0 9 6"><path d="M0.8 1 L4.5 4.6 L8.2 1" fill="none" stroke="#828182" stroke-width="1.2" stroke-linecap="round" stroke-linejoin="round"/></svg>
<div class="fld" style="left:680px;top:230px;width:80px"></div>
<div class="t ft" style="left:688.5px;top:237.2px">1280</div>
<div class="t ft" style="left:764px;top:237px;font-size:12.6px">X</div>
<div class="fld" style="left:776px;top:230px;width:80px"></div>
<div class="t ft" style="left:784.5px;top:237.2px">720</div>
<div class="t lbl" style="top:268.6px;">Aspect ratio:</div>
<div class="t ft" style="left:520px;top:274.6px;letter-spacing:-.4px">16:9</div>
<div class="t lbl" style="top:307.5px;letter-spacing:-0.38px;margin-left:-0.38px">Speed:</div>
<div class="a" style="left:520.2px;top:308.2px;width:12.6px;height:12.6px;border-radius:50%;border:1px solid #929192;background:#fff"></div>
<div class="t ft" style="left:538px;top:308.5px;font-size:13.7px">Fast(Low quality)</div>
<div class="a" style="left:650.7px;top:308.2px;width:13px;height:13px;border-radius:50%;border:1px solid #3fa9e6;background:#fff"></div>
<div class="a" style="left:653.5px;top:311.0px;width:7px;height:7px;border-radius:50%;background:#3fa9e6"></div>
<div class="t ft" style="left:669.5px;top:308.5px;font-size:13.7px;letter-spacing:.17px;color:#3fa9e6">Normal(Normal quality)</div>
<div class="a" style="left:824.2px;top:308.2px;width:12.6px;height:12.6px;border-radius:50%;border:1px solid #929192;background:#fff"></div>
<div class="t ft" style="left:842.5px;top:308.5px;font-size:13.7px">Slow(High quality)</div>
<div class="t lbl" style="top:347.3px;letter-spacing:0.11px;margin-left:0.11px">Video bitrate:</div>
<div class="fld" style="left:520px;top:339px;width:150px"></div>
<div class="t ft" style="left:528.5px;top:346.2px">3000 kbps</div>
<svg style="left:653px;top:348.5px" width="9" height="6" viewBox="0 0 9 6"><path d="M0.8 1 L4.5 4.6 L8.2 1" fill="none" stroke="#828182" stroke-width="1.2" stroke-linecap="round" stroke-linejoin="round"/></svg>
<div class="t lbl" style="top:386.2px;letter-spacing:-0.15px;margin-left:-0.15px">Frame rate:</div>
<div class="fld" style="left:520px;top:380px;width:150px"></div>
<div class="t ft" style="left:528.5px;top:387.2px">25 fps</div>
<svg style="left:653px;top:389.5px" width="9" height="6" viewBox="0 0 9 6"><path d="M0.8 1 L4.5 4.6 L8.2 1" fill="none" stroke="#828182" stroke-width="1.2" stroke-linecap="round" stroke-linejoin="round"/></svg>
<div class="t lbl" style="top:425.1px;letter-spacing:-0.12px;margin-left:-0.12px">Sample rate:</div>
<div class="fld" style="left:520px;top:421px;width:150px"></div>
<div class="t ft" style="left:528.5px;top:428.2px">44100 HZ</div>
<svg style="left:653px;top:430.5px" width="9" height="6" viewBox="0 0 9 6"><path d="M0.8 1 L4.5 4.6 L8.2 1" fill="none" stroke="#828182" stroke-width="1.2" stroke-linecap="round" stroke-linejoin="round"/></svg>
<div class="t lbl" style="top:464.0px;letter-spacing:0.19px;margin-left:0.19px">Audio bitrate:</div>
<div class="fld" style="left:520px;top:462px;width:150px"></div>
<div class="t ft" style="left:528.5px;top:469.2px">192 kbps</div>
<svg style="left:653px;top:471.5px" width="9" height="6" viewBox="0 0 9 6"><path d="M0.8 1 L4.5 4.6 L8.2 1" fill="none" stroke="#828182" stroke-width="1.2" stroke-linecap="round" stroke-linejoin="round"/></svg>
<div class="t lbl" style="top:502.9px;letter-spacing:-0.29px;margin-left:-0.29px">Channels:</div>
<div class="fld" style="left:520px;top:503px;width:150px"></div>
<div class="t ft" style="left:528.5px;top:510.2px">2 (stereo)</div>
<svg style="left:653px;top:512.5px" width="9" height="6" viewBox="0 0 9 6"><path d="M0.8 1 L4.5 4.6 L8.2 1" fill="none" stroke="#828182" stroke-width="1.2" stroke-linecap="round" stroke-linejoin="round"/></svg>
<div class="a" style="left:398px;top:554px;width:584px;height:1.5px;background:#d6d5d6"></div>
<div class="fld" style="left:733px;top:589px;width:80px;border-color:#a8a7a8"></div>
<div class="t" style="left:733px;top:595.7px;width:80px;text-align:center;font-size:13.2px;color:#5e5d5e">Cancel</div>
<div class="a" style="left:833px;top:589px;width:120px;height:26px;border-radius:4px;background:#39b1f5"></div>
<div class="t" style="left:833px;top:595.5px;width:120px;text-align:center;font-size:13.5px;color:#f4fbff">Export</div>

<div class="a" style="left:778px;top:187px;width:80px;height:33px;border:3px solid #d61519;box-shadow:2px 2.5px 3px rgba(40,20,20,.45),inset 1.5px 1.5px 2px rgba(60,20,20,.3)"></div>
<svg style="left:0;top:0" width="1366" height="768" viewBox="0 0 1366 768"><defs><filter id="ash" x="-10%" y="-10%" width="120%" height="130%"><feDropShadow dx="1.2" dy="1.8" stdDeviation="1.2" flood-color="#201010" flood-opacity=".4"/></filter></defs><path d="M649.8 342.1 L793 258.3 L789.2 256.1 L814.2 248.75 L795.5 266.25 L795 261.7 L650.6 343.5z" fill="#d4141a" stroke="#c81418" stroke-width="0.8" stroke-linejoin="round" filter="url(#ash)"/></svg>

</body>
</html>
